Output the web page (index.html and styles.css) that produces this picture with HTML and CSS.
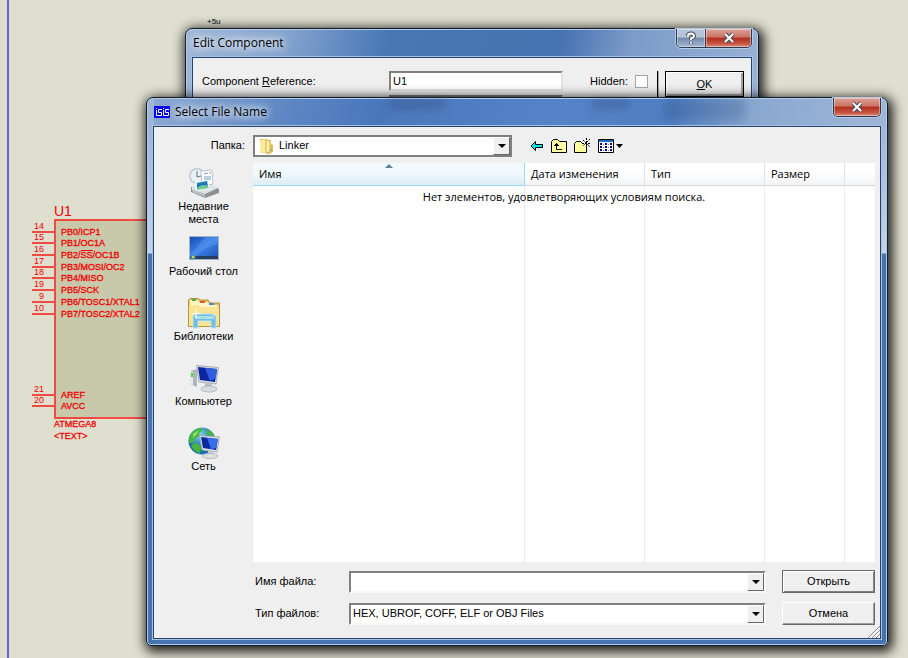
FILE: index.html
```html
<!DOCTYPE html>
<html lang="ru">
<head>
<meta charset="utf-8">
<title>Select File Name</title>
<link rel="stylesheet" href="styles.css">
</head>
<body>
<main class="desktop">
  <svg class="schematic" width="240" height="658" viewBox="0 0 240 658" aria-label="ATMEGA8">
    <path class="sheet-edge" d="M8 0V658"/>
    <text class="power" x="207" y="24">+5u</text>
    <rect class="chip" x="55" y="220" width="160" height="198"/>
    <path class="pins" d="M32 232H55M32 243H55M32 255H55M32 267H55M32 278H55M32 290H55M32 302H55M32 314H55M32 395H55M32 406H55"/>
    <path class="overline" d="M81 250.500H93"/>
    <text class="ref" x="54" y="216">U1</text>
    <g class="num">
      <text x="44" y="229">14</text><text x="44" y="240">15</text><text x="44" y="252">16</text><text x="44" y="264">17</text><text x="44" y="275">18</text><text x="44" y="287">19</text><text x="44" y="299">9</text><text x="44" y="311">10</text><text x="44" y="392">21</text><text x="44" y="403">20</text>
    </g>
    <g class="pin-name">
      <text x="61" y="235">PB0/ICP1</text><text x="61" y="246">PB1/OC1A</text><text x="61" y="258">PB2/SS/OC1B</text><text x="61" y="270">PB3/MOSI/OC2</text><text x="61" y="281">PB4/MISO</text><text x="61" y="293">PB5/SCK</text><text x="61" y="305">PB6/TOSC1/XTAL1</text><text x="61" y="317">PB7/TOSC2/XTAL2</text><text x="61" y="398">AREF</text><text x="61" y="409">AVCC</text><text x="54" y="427">ATMEGA8</text><text x="54" y="439">&lt;TEXT&gt;</text>
    </g>
  </svg>

  <section class="window edit-window" aria-label="Edit Component">
    <header class="titlebar">
      <h2 class="title">Edit Component</h2>
      <div class="caption-buttons">
        <button class="cap help" aria-label="Help"><svg width="14" height="14" viewBox="0 0 14 14"><path class="glyph-edge" d="M4 5Q4 2.500 7 2.500T10 5Q10 6.500 7 7.500V9M7 11V12.500"/><path class="glyph" d="M4 5Q4 2.500 7 2.500T10 5Q10 6.500 7 7.500V9M7 11V12.500"/></svg></button>
        <button class="cap close" aria-label="Close"><svg width="14" height="12" viewBox="0 0 14 12"><path class="glyph-edge" d="M3 2L11 10M11 2L3 10"/><path class="glyph" d="M3 2L11 10M11 2L3 10"/></svg></button>
      </div>
    </header>
    <div class="client edit-client">
      <label class="ref-label" for="reference">Component <u>R</u>eference:</label>
      <div class="edit-fields">
        <input class="sunken" id="reference" value="U1">
        <input class="sunken" aria-label="Component Value">
      </div>
      <label class="hidden-label" for="hidden">Hidden:</label>
      <input class="check" type="checkbox" id="hidden">
      <span class="rule"></span>
      <button class="ok"><u>O</u>K</button>
    </div>
  </section>

  <section class="window file-window" aria-label="Select File Name">
    <header class="titlebar">
      <span class="ghost ghost-value"></span><span class="ghost ghost-hidden"></span><span class="ghost ghost-button"></span>
      <svg class="app-icon" width="16" height="12" viewBox="0 0 16 12"><path fill="#0000f0" d="M0 0H16V12H0z"/><path fill="none" stroke="#fff" d="M2.500 2V3M2.500 4V9.500H4M8 3.500H4.500V6.500H7.500V9.500H4M9.500 2V3M9.500 4V9.500H11M15 3.500H11.500V6.500H14.500V9.500H11"/></svg>
      <h1 class="title">Select File Name</h1>
      <div class="caption-buttons">
        <button class="cap close" aria-label="Close"><svg width="14" height="12" viewBox="0 0 14 12"><path class="glyph-edge" d="M3 2L11 10M11 2L3 10"/><path class="glyph" d="M3 2L11 10M11 2L3 10"/></svg></button>
      </div>
    </header>
    <div class="client file-client">
      <div class="toolbar">
        <label class="folder-label" for="folder">Папка:</label>
        <div class="combo folder-combo">
          <svg class="folder-icon" width="16" height="16" viewBox="0 0 16 16"><path fill="#d5ae48" d="M1 1H8L9 2H12V14L10 16L1 14z"/><path fill="#fbeaa0" d="M1 2L6 1V15L1 14z"/><path fill="#ecd06f" d="M6 1L12 3V14L6 15z"/><path fill="#fff3bd" d="M8 3L10 4V13L8 14z"/><path fill="#e2bd55" d="M11 5L14 7V14L10 16z"/><path fill="#6aa6d8" d="M12 11H13V13H12z"/></svg>
          <select id="folder"><option>Linker</option></select>
          <span class="arrow"></span>
        </div>
        <div class="tools">
          <button aria-label="Назад"><svg width="14" height="14" viewBox="0 0 14 14"><path fill="#00e8e8" stroke="#000" d="M1 7L5.500 2.500V5.500H12.500V8.500H5.500V11.500z"/></svg></button>
          <button aria-label="Вверх"><svg width="16" height="14" viewBox="0 0 16 14"><path fill="#ffffa0" stroke="#000" d="M.5 13.500V2.500L2.500.500H6.500L8.500 2.500H15.500V13.500z"/><path fill="none" stroke="#000" d="M5.500 4V10.500H11M3 6.500H8M4 5.500H7"/></svg></button>
          <button aria-label="Новая папка"><svg width="17" height="16" viewBox="0 0 17 16"><path fill="#ffffa0" stroke="#000" d="M.5 14.500V5.500L2.500 3.500H6.500L8.500 5.500H12.500V14.500z"/><path stroke="#efefef" stroke-width="3" d="M9 5H16"/><path fill="none" stroke="#000" stroke-dasharray="2 1" d="M12.500 0V10M8 5.500H17M9 2L16 9M16 1L9 8"/></svg></button>
          <button aria-label="Вид"><svg width="26" height="14" viewBox="0 0 26 14"><path fill="#fff" stroke="#000" d="M.5.500H15.500V13.500H.5z"/><path fill="#1670c8" d="M1 1H15V3H1z"/><path stroke="#000080" stroke-width="2" stroke-dasharray="2 1" d="M3 4V12M8 4V12M13 4V12"/><path stroke="#777" stroke-dasharray="1 2" d="M5.500 5V12M10.500 5V12"/><path d="M18 5H25L21.500 9z"/></svg></button>
        </div>
      </div>

      <nav class="places">
        <a href="#recent"><svg width="32" height="32" viewBox="0 0 32 32"><path fill="#8d9195" d="M3 20L22 17L31 22V26L17 31L3 25z"/><path fill="#e0e3e4" d="M4 19L21 16L30 21L17 27L4 23z"/><path fill="#b9bdc0" d="M5 23L17 27V30L4 25z"/><circle cx="9" cy="9" r="8" fill="#bccbd5"/><circle cx="9" cy="9" r="6.500" fill="#e8f1f5"/><path fill="none" stroke="#60717d" d="M9 4V10L13 9"/><path fill="#fff" stroke="#bcc4ca" d="M13 4L24 3L25 17L14 19z"/><path stroke="#6f9fcc" d="M16 7L20 6M16 10H23M16 12H23M21 6H23"/><path fill="#e7f8ff" d="M7 15L20 13L22 22L8 24z"/><path fill="#1d78ba" d="M9 16L19 14L20 20L9 22z"/><path fill="#72c993" d="M9 21Q14 16 20 19L21 21L9 23z"/></svg><span>Недавние места</span></a>
        <a href="#desktop"><svg width="32" height="32" viewBox="0 0 32 32"><defs><linearGradient id="screen" x2="1" y2="1"><stop stop-color="#184cae"/><stop offset=".5" stop-color="#3b80ea"/><stop offset="1" stop-color="#2358b8"/></linearGradient></defs><path fill="#a4b2c2" d="M1 4H31V28H1z"/><path fill="url(#screen)" d="M2 5H30V24H2z"/><path fill="#5f9ff2" d="M17 5H30V12Q19 14 8 24H2Z" opacity=".4"/><path fill="#263e61" d="M2 24H30V27H2z"/><circle cx="5" cy="25" r="2.500" fill="#3d9ba7"/><path fill="#e7c546" d="M4 24H6V26H4z"/></svg><span>Рабочий стол</span></a>
        <a href="#libraries"><svg width="32" height="32" viewBox="0 0 32 32"><path fill="#e5bf5d" stroke="#b99136" d="M.5 3L2 1.500H10L12 3H20L22 6H31.500V29.500H.5z"/><path fill="#fff4c5" d="M2 3H10L11 5H20L22 8H30V12H2z"/><path fill="#f9e394" d="M1 8H10L12 10H31V29H1z"/><path fill="#4daa4f" d="M4 2H8V4H4z"/><path fill="#d35b35" d="M12 4H17V6H12z"/><path fill="#368ed0" d="M21 6H26V8H21z"/><path fill="#74bddd" stroke="#b8e6f3" d="M5 19L8 17H24L28 19V31H23V24H10V31H5z"/><path fill="#abdfe9" d="M7 19H26V22H7z"/><path stroke="#fff" d="M8 12V21M4 16.500H13"/></svg><span>Библиотеки</span></a>
        <a href="#computer"><svg width="32" height="32" viewBox="0 0 32 32"><path fill="#aeb5bb" d="M2 9L9 7V25L2 22z"/><path fill="#e5e7e9" d="M2 9L5 10V23L2 22z"/><path fill="#45d839" d="M3 11H5V15H3z"/><path fill="#d8dce0" stroke="#a8afb4" d="M8.500 3.500L30.500 5.500L28 22L11 20z"/><path fill="#0b27a0" d="M10 5L29 7L27 20L12 18z"/><path fill="#315ee1" d="M17 6L29 7L28 16L22 19z"/><path fill="#bac1c8" d="M17 21L24 22L23 26H17z"/><ellipse cx="21" cy="27" rx="8" ry="3" fill="#d9dde0" stroke="#b3b9be"/></svg><span>Компьютер</span></a>
        <a href="#network"><svg width="32" height="32" viewBox="0 0 32 32"><defs><radialGradient id="globe" cx=".4" cy=".25"><stop stop-color="#82d8f0"/><stop offset="1" stop-color="#176eae"/></radialGradient></defs><circle cx="14" cy="14" r="13.500" fill="url(#globe)"/><path fill="#46b738" d="M2 8Q6 2 13 1L15 3L11 6L12 9L7 11L5 16L1 16zM19 2Q27 6 27 14L24 12L22 8L18 7zM3 18L9 16L13 20L12 27Q5 24 3 18z"/><path fill="#94df66" d="M5 7L11 3L9 7L5 11z"/><path fill="#dce1e4" stroke="#a4adb3" d="M11.500 8.500L31.500 10L29 25L14 23z"/><path fill="#092a9f" d="M13 10L30 12L28 23L15 21z"/><path fill="#3a6bea" d="M19 11L30 12L28 21L23 22z"/><path fill="#c1c7cc" d="M20 24H25V28H20z"/><ellipse cx="22" cy="29" rx="8" ry="2.500" fill="#dce0e3" stroke="#b4babe"/></svg><span>Сеть</span></a>
      </nav>

      <div class="file-list">
        <table>
          <colgroup><col class="name-col"><col class="date-col"><col class="type-col"><col class="size-col"><col></colgroup>
          <thead><tr><th class="sorted">Имя</th><th>Дата изменения</th><th>Тип</th><th>Размер</th><th></th></tr></thead>
          <tbody><tr><td></td><td></td><td></td><td></td><td></td></tr></tbody>
        </table>
        <p class="empty">Нет элементов, удовлетворяющих условиям поиска.</p>
      </div>

      <form class="fields">
        <label for="filename">Имя файла:</label>
        <div class="combo"><input id="filename"><span class="arrow"></span></div>
        <button class="push default" type="button">Открыть</button>
        <label for="filetype">Тип файлов:</label>
        <div class="combo"><select id="filetype"><option>HEX, UBROF, COFF, ELF or OBJ Files</option></select><span class="arrow"></span></div>
        <button class="push" type="button">Отмена</button>
      </form>
      <svg class="grip" width="12" height="12" viewBox="0 0 12 12"><path stroke="#888" d="M0 12L12 0M4 12L12 4M8 12L12 8"/><path stroke="#fff" d="M1.500 12L12 1.500M5.500 12L12 5.500"/></svg>
    </div>
  </section>
</main>
</body>
</html>
```

FILE: styles.css
```css
* { box-sizing: border-box; }
body { margin: 0; font: 11px/13px "Liberation Sans", Arial, sans-serif; color: #000; }
button, input, select { font: inherit; color: inherit; margin: 0; border-radius: 0; }
.desktop { position: relative; min-height: 100vh; overflow: hidden; background: #dfdfd0; }

.schematic { display: block; }
.sheet-edge { stroke: #6464dc; stroke-width: 2; }
.chip { fill: #c8c8aa; stroke: #f04a42; stroke-width: 2; }
.pins { stroke: #f04a42; stroke-width: 2; }
.overline { stroke: #f00000; }
.schematic text { font-family: "Liberation Sans", Arial, sans-serif; fill: #f00000; }
.schematic .power { font-size: 8px; fill: #000; }
.schematic .ref { font-size: 14px; }
.num text { font-size: 9px; text-anchor: end; }
.pin-name text { font-size: 9px; stroke: #f00000; stroke-width: .3px; }

.window {
  position: absolute;
  display: flex;
  flex-direction: column;
  padding: 0 6px 6px;
  border: 1px solid #101c2c;
  border-radius: 7px 7px 5px 5px;
  box-shadow: inset 0 0 0 1px #b4cbe8, 2px 3px 12px 3px rgba(0, 0, 0, .85);
}
.edit-window {
  left: 185px; right: 149px; top: 28px; height: 300px;
  background: linear-gradient(100deg, #9fb7d8 0, #84a3cf 100px, #4878b4 200px, #4572b0 370px, #7b9bc9 440px, #98b1d5 570px);
}
.file-window {
  left: 146px; right: 20px; top: 97px; bottom: 12px;
  background:
    linear-gradient(#9fb6d6 30px, #c3d4ea 155px, #4774b0 156px) left / 7px 100% no-repeat,
    linear-gradient(#9fb6d6 30px, #c3d4ea 155px, #4774b0 156px) right / 7px 100% no-repeat,
    linear-gradient(#4774b0, #4774b0) bottom / 100% 8px no-repeat,
    linear-gradient(100deg, #8fabd3 0, #5f88c4 130px, #4a77bc 230px, #5582c8 400px, #4f7ec2 520px, #8aa7d0 600px, #9ab3d6 700px);
}
.titlebar { position: relative; display: flex; flex: 0 0 28px; align-items: center; gap: 5px; padding-left: 1px; }
.title { margin: 0; font: 12px/16px "Open Sans", "Noto Sans", sans-serif; text-shadow: 0 0 6px rgba(255, 255, 255, .8), 0 0 10px #fff, 0 0 14px #fff; }
.caption-buttons {
  display: flex; align-self: flex-start; margin-left: auto;
  border: 1px solid #2b3950; border-top: 0; border-radius: 0 0 5px 5px;
  box-shadow: 0 0 0 1px #b8cbe4; overflow: hidden;
}
.cap { display: flex; align-items: center; justify-content: center; height: 18px; padding: 0; border: 0; box-shadow: inset 0 0 0 1px rgba(255, 255, 255, .4); }
.help { width: 28px; background: linear-gradient(#b6c4d8 0 45%, #7389aa 50%, #a3b9d6); }
.close { width: 46px; background: linear-gradient(#dda197 0, #cb7365 45%, #b22e1c 50%, #c5523f 80%, #d98f7c); }
.help + .close { border-left: 1px solid #43364a; }
.glyph, .glyph-edge { fill: none; stroke: #fff; stroke-width: 2; }
.glyph-edge { stroke: #4a4d5d; stroke-width: 4; }
.ghost { position: absolute; height: 8px; top: 2px; background: #243f68; opacity: .35; filter: blur(4px); }
.ghost-value { left: 236px; width: 56px; }
.ghost-hidden { left: 440px; width: 36px; }
.ghost-button { left: 510px; width: 82px; height: 20px; opacity: .2; }
.client { position: relative; flex: 1; border: 1px solid #26436c; background: #efefef; box-shadow: 0 0 0 1px #a8c2e4; }

.edit-client { display: flex; align-items: flex-start; padding: 13px 7px 0 8px; }
.ref-label { flex: 0 0 188px; margin-top: 4px; padding-left: 1px; }
.edit-fields { display: flex; flex: 0 0 174px; flex-direction: column; gap: 4px; }
.sunken { height: 20px; width: 100%; padding: 0 2px; border: 2px solid; border-color: #808080 #e3e3e3 #e3e3e3 #808080; background: #fff; }
.hidden-label { margin: 4px 7px 0 auto; }
.check { appearance: none; width: 13px; height: 13px; margin-top: 4px; border: 1px solid #a5a5a5; background: #fff; }
.rule { width: 2px; height: 80px; margin: 0 6px 0 9px; border-left: 1px solid #000; background: #aaa; }
.ok { width: 79px; height: 26px; border: 1px solid #000; background: #efefef; box-shadow: inset 1px 1px #fff, inset -2px -2px #a0a0a0; }

.file-client { display: grid; grid-template: 36px 1fr 76px / 99px 1fr; padding-right: 5px; }
.toolbar { grid-column: 1 / -1; display: flex; align-items: center; padding-top: 1px; }
.folder-label { width: 99px; padding-right: 8px; text-align: right; }
.combo { position: relative; display: flex; align-items: center; height: 22px; border: 2px solid; border-color: #808080 #f8f8f8 #f8f8f8 #808080; background: #fff; }
.folder-combo { width: 259px; padding-left: 4px; border-color: #808080; }
.combo select, .combo input { flex: 1; min-width: 0; height: 100%; padding: 0 2px; appearance: none; border: 0; outline: 0; background: transparent; }
.folder-combo select { padding-left: 4px; }
.arrow { position: absolute; right: 0; top: 0; bottom: 0; width: 17px; border: 1px solid; border-color: #fff #696969 #696969 #fff; background: #efefef; pointer-events: none; }
.arrow::after { content: ""; position: absolute; left: 4px; top: 6px; border: 4px solid transparent; border-top-color: #000; border-bottom: 0; }
.tools { display: flex; align-items: center; gap: 7px; margin-left: 18px; }
.tools button { display: flex; padding: 0; border: 0; background: none; }

.places { display: flex; flex-direction: column; align-items: center; padding-top: 4px; }
.places a { display: flex; flex-direction: column; align-items: center; gap: 1px; min-height: 65px; width: 72px; color: #000; text-decoration: none; text-align: center; }
.file-list { position: relative; background: #fff; }
table { width: 100%; height: 100%; border-collapse: separate; border-spacing: 0; table-layout: fixed; }
.name-col { width: 272px; } .date-col, .type-col { width: 120px; } .size-col { width: 80px; }
th { position: relative; height: 23px; padding: 0 6px; text-align: left; font: 11px/16px "Open Sans", "Noto Sans", sans-serif; border-right: 1px solid #dfe3e8; border-bottom: 1px solid #d5d5d5; background: linear-gradient(#fff 40%, #f3f4f6); }
th.sorted { border-color: #96d9f9; background: linear-gradient(#f2f9fc 40%, #dcedf6); }
th.sorted::after { content: ""; position: absolute; left: 132px; top: 1px; border: 4px solid transparent; border-bottom-color: #5b83a0; border-top: 0; }
td { padding: 0; border-right: 1px solid #e6eefb; }
th:last-child, td:last-child { border-right: 0; }
.empty { position: absolute; top: 26px; left: 0; right: 0; margin: 0; text-align: center; font: 11px/16px "Open Sans", "Noto Sans", sans-serif; }
.fields { grid-column: 2; display: grid; grid-template-columns: 96px 1fr 93px; grid-auto-rows: 23px; align-items: center; align-content: start; row-gap: 9px; padding-top: 8px; }
.fields label { padding-left: 2px; }
.fields .combo { margin-right: 16px; }
.push { height: 23px; border: 1px solid; border-color: #fff #696969 #696969 #fff; background: #efefef; box-shadow: inset -1px -1px #a0a0a0; }
.push.default { border-color: #696969; box-shadow: inset 1px 1px #fff, inset -1px -1px #808080; }
.grip { position: absolute; right: 0; bottom: 0; }
```
